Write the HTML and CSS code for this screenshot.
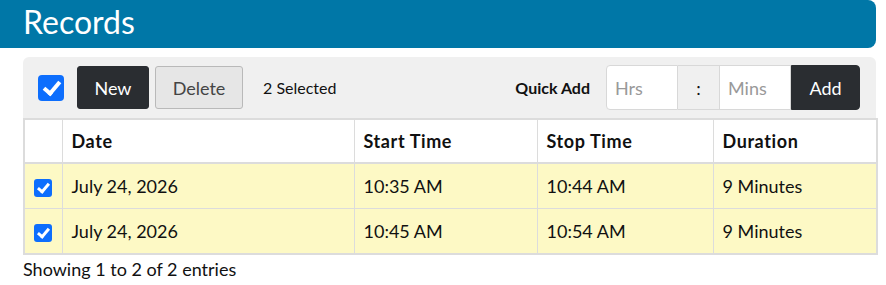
FILE: index.html
```html
<!DOCTYPE html>
<html lang="en">
<head>
  <meta charset="UTF-8" />
  <title>Records</title>
  <link rel="stylesheet" href="styles.css">
</head>
<body>
  <header class="page-head">
    <h1>Records</h1>
  </header>

  <div class="records">
    <div class="toolbar">
      <span class="check big checked"></span>
      <button class="btn btn-dark">New</button>
      <button class="btn btn-light">Delete</button>
      <span class="selected">2 Selected</span>
      <span class="spacer"></span>
      <span class="quick-label">Quick Add</span>
      <div class="input-group">
        <input type="text" class="field" placeholder="Hrs">
        <span class="addon">:</span>
        <input type="text" class="field" placeholder="Mins">
        <button class="btn btn-dark btn-add">Add</button>
      </div>
    </div>

    <table class="grid">
      <colgroup>
        <col class="c-check">
        <col class="c-date">
        <col class="c-start">
        <col class="c-stop">
        <col class="c-dur">
      </colgroup>
      <thead>
        <tr>
          <th></th>
          <th>Date</th>
          <th>Start Time</th>
          <th>Stop Time</th>
          <th>Duration</th>
        </tr>
      </thead>
      <tbody>
        <tr class="picked">
          <td class="cell-check"><span class="check checked"></span></td>
          <td>July 24, 2026</td>
          <td>10:35 AM</td>
          <td>10:44 AM</td>
          <td>9 Minutes</td>
        </tr>
        <tr class="picked">
          <td class="cell-check"><span class="check checked"></span></td>
          <td>July 24, 2026</td>
          <td>10:45 AM</td>
          <td>10:54 AM</td>
          <td>9 Minutes</td>
        </tr>
      </tbody>
    </table>

    <div class="info">Showing 1 to 2 of 2 entries</div>
  </div>
</body>
</html>
```

FILE: styles.css
```css
body, html {
  margin: 0;
  padding: 0;
  background: #fff;
  font-family: 'Lato', 'Open Sans', sans-serif;
  color: #111;
}
.page-head {
  background: #0077a7;
  width: 876px;
  height: 48px;
  border-radius: 0 8px 8px 0;
  box-sizing: border-box;
  padding-left: 23px;
}
.page-head h1 {
  margin: 0;
  color: #fff;
  font-weight: 400;
  font-size: 32px;
  line-height: 44px;
}
.records {
  margin: 9px 10px 0 23px;
  width: 853px;
}
.toolbar {
  display: flex;
  align-items: center;
  height: 61px;
  padding: 0 16px 0 15px;
  background: #f0f0f0;
  border-radius: 6px 6px 0 0;
}
.check {
  display: inline-block;
  width: 18px;
  height: 18px;
  border-radius: 3px;
  background: #0d6efd;
  position: relative;
}
.check.checked::after {
  content: "";
  position: absolute;
  left: 6px;
  top: 2px;
  width: 4px;
  height: 9px;
  border: solid #fff;
  border-width: 0 3px 3px 0;
  transform: rotate(40deg);
}
.check.big {
  width: 26px;
  height: 26px;
  border-radius: 4px;
  margin-right: 13px;
}
.check.big::after {
  left: 9px;
  top: 3px;
  width: 6px;
  height: 13px;
  border-width: 0 4px 4px 0;
}
.btn {
  font-family: inherit;
  font-size: 18px;
  height: 43px;
  border-radius: 3px;
  cursor: pointer;
}
.btn-dark {
  background: #2a2d31;
  color: #fff;
  border: 1px solid #2a2d31;
  width: 72px;
}
.btn-light {
  background: #e6e6e6;
  color: #444;
  border: 1px solid #b9b9b9;
  width: 88px;
  margin-left: 6px;
}
.selected {
  margin-left: 20px;
  font-size: 16px;
}
.spacer {
  flex: 1;
}
.quick-label {
  font-weight: 700;
  font-size: 16px;
  margin-right: 16px;
}
.input-group {
  display: flex;
  height: 45px;
}
.field {
  width: 72px;
  box-sizing: border-box;
  border: 1px solid #d8d8d8;
  background: #fff;
  font-family: inherit;
  font-size: 18px;
  padding: 0 8px;
  margin: 0;
  outline: none;
}
.field::placeholder {
  color: #999;
}
.input-group .field:first-child {
  border-radius: 4px 0 0 4px;
}
.addon {
  width: 41px;
  display: flex;
  align-items: center;
  justify-content: center;
  background: #f0f0f0;
  border-top: 1px solid #d8d8d8;
  border-bottom: 1px solid #d8d8d8;
  box-sizing: border-box;
  font-size: 18px;
}
.btn-add {
  height: 45px;
  width: 69px;
  border-radius: 0 4px 4px 0;
}
.grid {
  width: 853px;
  border-collapse: collapse;
  table-layout: fixed;
  border: 2px solid #dcdcdc;
  font-size: 18px;
}
.c-check { width: 38px; }
.c-date { width: 292px; }
.c-start { width: 183px; }
.c-stop { width: 176px; }
.c-dur { width: 164px; }
.grid th,
.grid td {
  border: 1px solid #dcdcdc;
  padding: 0 9px;
  text-align: left;
}
.grid th {
  height: 42px;
  font-weight: 700;
  letter-spacing: 0.6px;
  border-bottom: 2px solid #dcdcdc;
  background: #fff;
}
.grid td {
  height: 44px;
}
.picked td {
  background: #fdf9c5;
}
.grid .cell-check {
  padding: 0 0 0 9px;
}
.cell-check .check {
  vertical-align: middle;
}
.info {
  font-size: 18px;
  padding-top: 3px;
}
```
